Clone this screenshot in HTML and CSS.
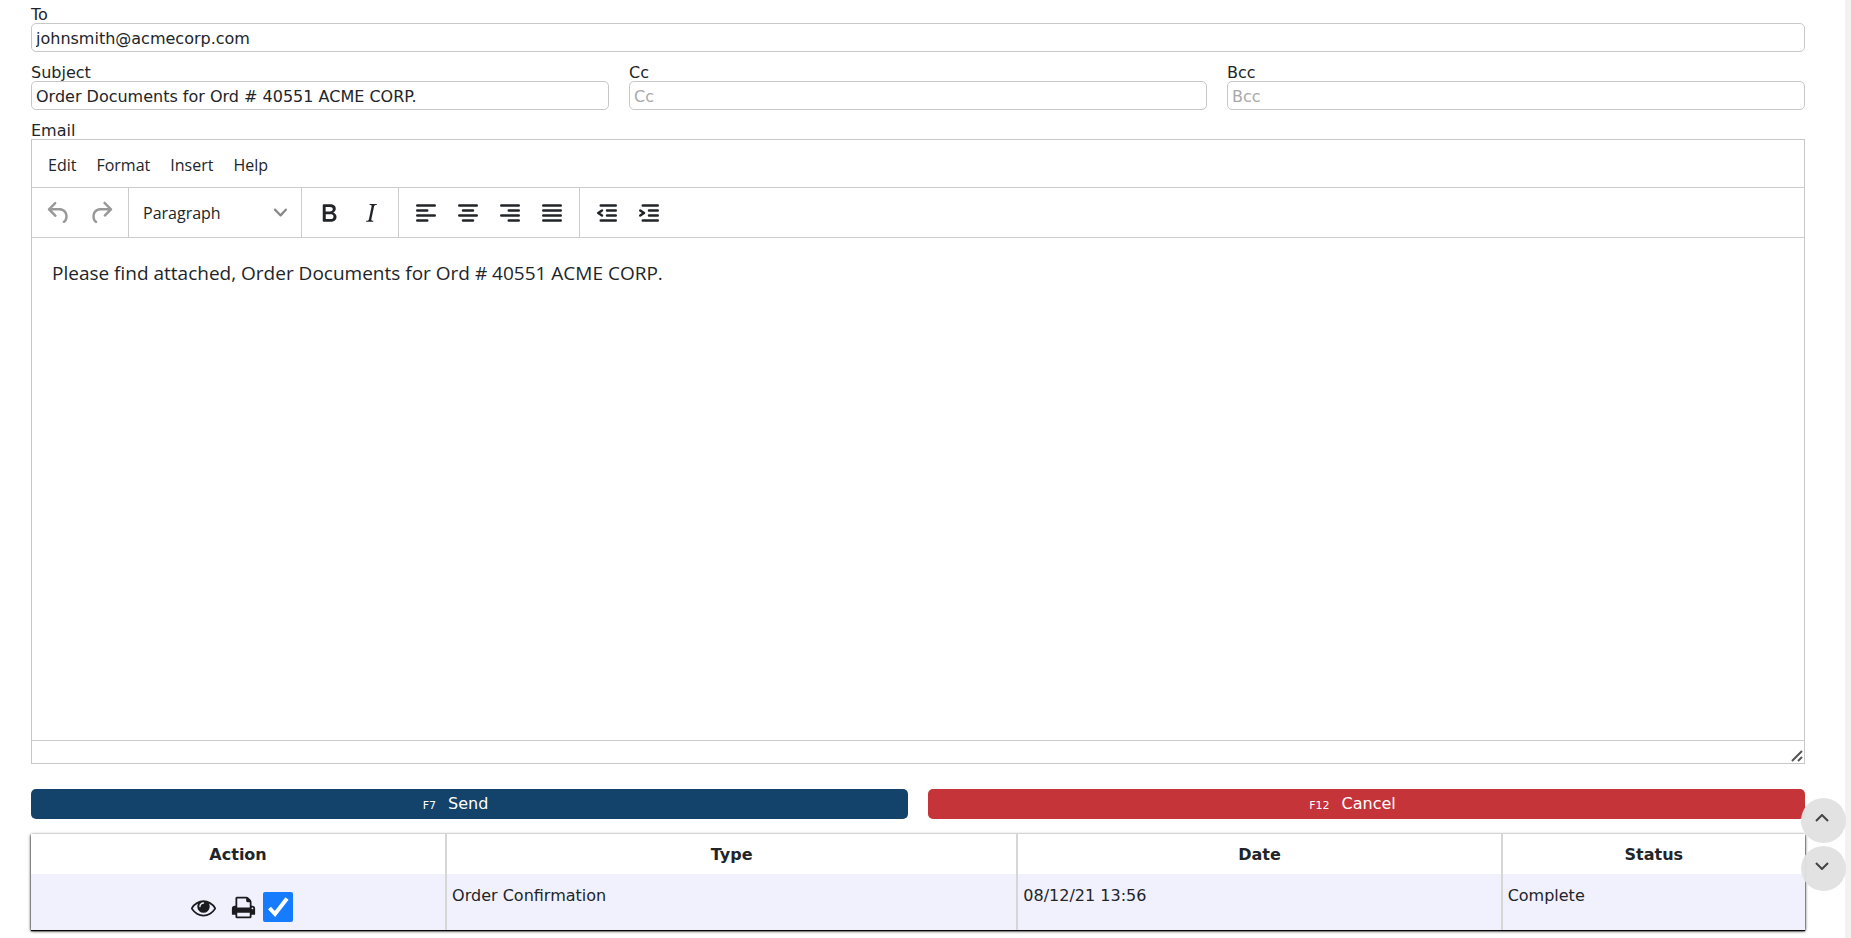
FILE: index.html
```html
<!DOCTYPE html>
<html lang="en">
<head>
<meta charset="utf-8">
<title>Email Order Documents</title>
<link rel="stylesheet" href="styles.css">
</head>
<body>
<main class="page">
  <form class="mail" onsubmit="return false">
    <div class="field">
      <label for="to">To</label>
      <input id="to" type="text" value="johnsmith@acmecorp.com">
    </div>
    <div class="field-row">
      <div class="field">
        <label for="subject">Subject</label>
        <input id="subject" type="text" value="Order Documents for Ord # 40551 ACME CORP.">
      </div>
      <div class="field">
        <label for="cc">Cc</label>
        <input id="cc" type="text" placeholder="Cc">
      </div>
      <div class="field">
        <label for="bcc">Bcc</label>
        <input id="bcc" type="text" placeholder="Bcc">
      </div>
    </div>
    <div class="field field-editor">
      <label for="email">Email</label>
      <div class="editor">
        <div class="menubar" role="menubar">
          <button type="button" role="menuitem">Edit</button>
          <button type="button" role="menuitem">Format</button>
          <button type="button" role="menuitem">Insert</button>
          <button type="button" role="menuitem">Help</button>
        </div>
        <div class="toolbar" role="toolbar" aria-label="Formatting">
          <div class="group">
            <button type="button" class="tool" aria-label="Undo" disabled><svg viewBox="0 0 24 24"><path d="M6.4 8H12c3.7 0 6.2 2 6.8 5.1.6 2.7-.4 5.6-2.3 6.8a1 1 0 0 1-1-1.8c1.1-.6 1.8-2.7 1.4-4.6-.5-2.1-2.1-3.5-4.9-3.5H6.4l3.3 3.3a1 1 0 1 1-1.4 1.4l-5-5a1 1 0 0 1 0-1.4l5-5a1 1 0 0 1 1.4 1.4L6.4 8Z"/></svg></button>
            <button type="button" class="tool" aria-label="Redo" disabled><svg viewBox="0 0 24 24"><path d="M17.6 10H12c-2.8 0-4.4 1.4-4.9 3.5-.4 2 .3 4 1.4 4.6a1 1 0 1 1-1 1.8c-2-1.2-2.9-4.1-2.3-6.8.6-3 3-5.1 6.8-5.1h5.6l-3.3-3.3a1 1 0 1 1 1.4-1.4l5 5a1 1 0 0 1 0 1.4l-5 5a1 1 0 0 1-1.4-1.4l3.3-3.3Z"/></svg></button>
          </div>
          <div class="group">
            <button type="button" class="block-format" aria-haspopup="listbox"><span>Paragraph</span><svg viewBox="0 0 10 10"><path d="M8.7 2.2c.3-.3.8-.3 1 0 .4.4.4.9 0 1.2L5.7 7.8c-.3.3-.9.3-1.2 0L.2 3.4a.8.8 0 0 1 0-1.2c.3-.3.8-.3 1.1 0L5 6l3.7-3.8Z"/></svg></button>
          </div>
          <div class="group">
            <button type="button" class="tool" aria-label="Bold"><svg viewBox="0 0 24 24"><path fill-rule="evenodd" d="M7.8 19c-.3 0-.5 0-.6-.2l-.2-.5V5.7c0-.2 0-.4.2-.5l.6-.2h5c1.5 0 2.7.3 3.5 1 .7.6 1.1 1.4 1.1 2.5a3 3 0 0 1-.6 1.9c-.4.6-1 1-1.6 1.2.4.1.9.3 1.3.6s.8.7 1 1.2c.4.4.5 1 .5 1.6 0 1.3-.4 2.3-1.3 3-.8.7-2.1 1-3.8 1H7.8Zm5-8.3c.6 0 1.2-.1 1.6-.5.4-.3.6-.7.6-1.3 0-1.1-.8-1.7-2.3-1.7H9.3v3.5h3.4Zm.5 6c.7 0 1.3-.1 1.7-.4.4-.4.6-.9.6-1.5s-.2-1-.7-1.4c-.4-.3-1-.4-2-.4H9.4v3.8h4Z"/></svg></button>
            <button type="button" class="tool" aria-label="Italic"><svg viewBox="0 0 24 24"><path d="m16.7 4.7-.1.9h-.3c-.6 0-1 0-1.4.3-.3.3-.4.6-.5 1.1l-2.1 9.8v.6c0 .5.4.8 1.4.8h.2l-.2.8H8l.2-.8h.2c1.1 0 1.8-.5 2-1.5l2-9.8.1-.5c0-.6-.4-.8-1.4-.8h-.3l.2-.9h5.8Z"/></svg></button>
          </div>
          <div class="group">
            <button type="button" class="tool lines" aria-label="Align left"><svg viewBox="0 0 24 24"><path d="M5 6h14M5 10h8M5 14h14M5 18h8"/></svg></button>
            <button type="button" class="tool lines" aria-label="Align center"><svg viewBox="0 0 24 24"><path d="M5 6h14M8 10h8M5 14h14M8 18h8"/></svg></button>
            <button type="button" class="tool lines" aria-label="Align right"><svg viewBox="0 0 24 24"><path d="M5 6h14M11 10h8M5 14h14M11 18h8"/></svg></button>
            <button type="button" class="tool lines" aria-label="Justify"><svg viewBox="0 0 24 24"><path d="M5 6h14M5 10h14M5 14h14M5 18h14"/></svg></button>
          </div>
          <div class="group">
            <button type="button" class="tool lines" aria-label="Decrease indent"><svg viewBox="0 0 24 24"><path d="M7 6h12M12 10h7M12 14h7M7 18h12M8 10l-3 2 3 2"/></svg></button>
            <button type="button" class="tool lines" aria-label="Increase indent"><svg viewBox="0 0 24 24"><path d="M7 6h12M12 10h7M12 14h7M7 18h12M5 10l3 2-3 2"/></svg></button>
          </div>
        </div>
        <textarea id="email" class="content">Please find attached, Order Documents for Ord # 40551 ACME CORP.</textarea>
        <div class="statusbar">
          <svg viewBox="0 0 12 12"><path d="M1 11 11 1M7 11l4-4"/></svg>
        </div>
      </div>
    </div>
    <div class="actions">
      <button type="submit" class="action send"><small>F7</small>Send</button>
      <button type="button" class="action cancel"><small>F12</small>Cancel</button>
    </div>
  </form>

  <table class="documents">
    <colgroup><col class="col-action"><col class="col-type"><col class="col-date"><col class="col-status"></colgroup>
    <thead>
      <tr><th>Action</th><th>Type</th><th>Date</th><th>Status</th></tr>
    </thead>
    <tbody>
      <tr>
        <td>
          <div class="row-tools">
            <button type="button" class="row-tool" aria-label="View"><svg viewBox="0 0 1792 1792"><path d="M1664 960q-152-236-381-353 61 104 61 225 0 185-131.500 316.500t-316.500 131.500-316.500-131.500-131.500-316.500q0-121 61-225-229 117-381 353 133 205 333.500 326.500t434.500 121.500 434.500-121.500 333.500-326.500zm-720-384q0-20-14-34t-34-14q-125 0-214.500 89.500t-89.500 214.500q0 20 14 34t34 14 34-14 14-34q0-86 61-147t147-61q20 0 34-14t14-34zm848 384q0 34-20 69-140 230-376.500 368.500t-499.500 138.500-499.500-139-376.500-368q-20-35-20-69t20-69q140-229 376.500-368t499.500-139 499.500 139 376.500 368q20 35 20 69z"/></svg></button>
            <button type="button" class="row-tool" aria-label="Print"><svg viewBox="0 0 1792 1792"><path d="M448 1536h896v-256h-896v256zm0-640h896v-384h-160q-40 0-68-28t-28-68v-160h-640v640zm1152 64q0-26-19-45t-45-19-45 19-19 45 19 45 45 19 45-19 19-45zm128 0v416q0 13-9.500 22.500t-22.500 9.500h-224v160q0 40-28 68t-68 28h-960q-40 0-68-28t-28-68v-160h-224q-13 0-22.500-9.500t-9.500-22.500v-416q0-79 56.500-135.500t135.500-56.500h64v-544q0-40 28-68t68-28h672q40 0 88 20t76 48l152 152q28 28 48 76t20 88v256h64q79 0 135.500 56.500t56.500 135.500z"/></svg></button>
            <input type="checkbox" class="pick" aria-label="Attach Order Confirmation" checked>
          </div>
        </td>
        <td>Order Confirmation</td>
        <td>08/12/21 13:56</td>
        <td>Complete</td>
      </tr>
    </tbody>
  </table>
</main>
<nav class="scrollers" aria-label="Scroll">
  <button type="button" aria-label="Scroll up"><svg viewBox="0 0 14 8"><path d="M1 7l6-6 6 6"/></svg></button>
  <button type="button" aria-label="Scroll down"><svg viewBox="0 0 14 8"><path d="M1 1l6 6 6-6"/></svg></button>
</nav>
</body>
</html>
```

FILE: styles.css
```css
* {
  box-sizing: border-box;
}

body {
  margin: 0;
  background: #fff;
  color: #212529;
  font: 16px/18px "DejaVu Sans", Verdana, sans-serif;
}

button,
input,
textarea {
  font: inherit;
  color: inherit;
}

button {
  padding: 0;
  border: 0;
  background: none;
}

svg {
  display: block;
  fill: currentColor;
}

.page {
  display: flex;
  flex-direction: column;
  min-height: 100vh;
  padding: 5px 40px 8px 31px;
  border-right: 6px solid #f3f2f1;
}

.mail {
  display: flex;
  flex: 1;
  flex-direction: column;
  gap: 11px;
}

.field {
  display: flex;
  flex-direction: column;
  min-width: 0;
}

.field label {
  height: 18px;
  line-height: 20px;
}

.field input {
  width: 100%;
  height: 29px;
  padding: 2px 4px 0;
  border: 1px solid #c8c8c8;
  border-radius: 5px;
  background: #fff;
}

.field input::placeholder {
  color: #a9a9a9;
  opacity: 1;
}

.field-row {
  display: grid;
  grid-template-columns: repeat(3, 1fr);
  gap: 20px;
}

.field-editor,
.editor {
  flex: 1;
}

.editor {
  display: flex;
  flex-direction: column;
  border: 1px solid #c8c8c8;
  font-family: "Open Sans", "Segoe UI", sans-serif;
}

.menubar {
  display: flex;
  gap: 20px;
  height: 48px;
  padding: 2px 16px 0;
  border-bottom: 1px solid #ccc;
}

.toolbar {
  display: flex;
  height: 50px;
  border-bottom: 1px solid #ccc;
}

.group {
  display: flex;
  align-items: center;
  padding: 0 6px;
  border-right: 1px solid #ccc;
}

.group:last-child {
  border-right: 0;
}

.tool {
  display: grid;
  place-items: center;
  width: 42px;
  height: 42px;
}

.tool svg {
  width: 30px;
  height: 30px;
}

.tool:disabled {
  color: #999;
}

.lines path {
  fill: none;
  stroke: currentColor;
  stroke-width: 2;
  stroke-linecap: round;
  stroke-linejoin: round;
}

.block-format {
  display: flex;
  align-items: center;
  justify-content: space-between;
  width: 160px;
  padding: 0 8px;
}

.block-format svg {
  width: 13px;
  height: 13px;
  color: #888;
}

.content {
  flex: 1;
  width: 100%;
  min-height: 200px;
  padding: 21px 20px;
  border: 0;
  resize: none;
  font-size: 19px;
  line-height: 28px;
}

.statusbar {
  display: flex;
  align-items: flex-end;
  justify-content: flex-end;
  height: 23px;
  padding: 1px;
  border-top: 1px solid #ccc;
}

.statusbar svg {
  width: 12px;
  height: 12px;
  fill: none;
  stroke: #555;
  stroke-width: 2;
}

.actions {
  display: grid;
  grid-template-columns: 1fr 1fr;
  gap: 20px;
  padding: 14px 0 15px;
}

.action {
  height: 30px;
  padding: 2px 28px 0 0;
  border-radius: 5px;
  color: #fff;
}

.action small {
  margin-right: 12px;
  font-size: 11px;
}

.send {
  background: #13436b;
}

.cancel {
  background: #c53439;
}

.documents {
  width: 100%;
  border-collapse: collapse;
  table-layout: fixed;
  box-shadow: 0 1px 3px #000, 0 1px 1px #111;
}

.col-action {
  width: 23.4%;
}

.col-type {
  width: 32.2%;
}

.col-date {
  width: 27.3%;
}

.documents th {
  height: 40px;
  padding: 2px 0 0;
}

.documents td {
  height: 56px;
  padding: 13px 5px 0;
  background: #f1f1fd;
  vertical-align: top;
}

.documents th + th,
.documents td + td {
  border-left: 2px solid #d6d6d6;
}

.row-tools {
  display: flex;
  align-items: center;
  justify-content: center;
  padding: 5px 0 0 8px;
  color: #1a1a1f;
}

.row-tool {
  margin-right: 15px;
}

.row-tool + .row-tool {
  margin-right: 7px;
}

.row-tool svg {
  width: 25px;
  height: 25px;
}

.pick {
  appearance: none;
  width: 30px;
  height: 30px;
  margin: 0;
  border-radius: 2px;
  background: #fff;
}

.pick:checked {
  background: #157bff url("data:image/svg+xml,%3Csvg xmlns='http://www.w3.org/2000/svg' viewBox='0 0 30 30'%3E%3Cpath d='M6.500 16l5.500 6L24 6.500' fill='none' stroke='%23fff' stroke-width='4'/%3E%3C/svg%3E");
}

.scrollers {
  position: fixed;
  right: 5px;
  bottom: 47px;
  display: grid;
  gap: 3px;
}

.scrollers button {
  display: grid;
  justify-content: center;
  width: 45px;
  height: 45px;
  padding: 16px 3px 0 0;
  border-radius: 50%;
  background: rgba(224, 224, 224, 0.95);
  color: #444;
}

.scrollers svg {
  width: 14px;
  height: 8px;
  fill: none;
  stroke: currentColor;
  stroke-width: 2;
}
```
